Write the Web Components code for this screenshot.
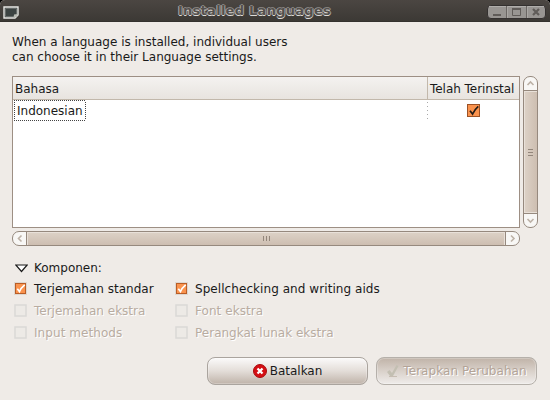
<!DOCTYPE html>
<html lang="id">
<head>
<meta charset="utf-8">
<title>Installed Languages</title>
<style>
html,body{margin:0;height:100%;background:#000;overflow:hidden}
body{font:12px/15px "DejaVu Sans",sans-serif;color:#1a1a1a}
</style>
</head>
<body>
<app-window></app-window>
<script>
function define(name, html) {
  const t = document.createElement('template');
  t.innerHTML = '<style>*{box-sizing:border-box}:host{box-sizing:border-box}</style>' + html;
  customElements.define(name, class extends HTMLElement {
    constructor() {
      super();
      this.attachShadow({mode: 'open'}).append(t.content.cloneNode(true));
    }
  });
}

define('title-bar', `
<style>
:host{display:grid;grid-template-columns:20px 1fr 60px;align-items:center;height:22px;padding:0 4px 0 3px;
 background:linear-gradient(#4b4642,#3c3935);border-bottom:1px solid #35322f}
.t{text-align:center;font-weight:bold;font-size:13px;letter-spacing:.27px;line-height:20px;color:#54504d;white-space:nowrap;
 text-shadow:0 1px 0 #dddbd8,-1px 0 0 #a09ea0,1px 0 0 #96938f,0 -1px 0 #827f7c}
svg{display:block}
.c{justify-self:end;margin-top:3px}
.i{margin-top:4px}
</style>
<svg class="i" width="16" height="13" viewBox="0 0 16 13"><path d="M1 1h14v8l-3 3H1z" fill="#3c4342" stroke="#e9e9e6" stroke-width="1.400"/><path d="M2.500 2.500h11v6l-2.500 2H2.500z" fill="#3c4342" stroke="#666b69"/><path d="M10.500 12 11 8.500l4-.5-1 3z" fill="#b9bbb4"/></svg>
<div class="t"><slot></slot></div>
<svg class="c" width="59" height="14" viewBox="0 0 59 14"><rect x=".5" y=".5" width="58" height="13" rx="3.500" fill="#989592" stroke="#343130"/><path d="M2 1.500h55" stroke="#b0aeab"/><path d="M19.500 1v12M39.500 1v12" stroke="#6a6663"/><path d="M20.500 1v12M40.500 1v12" stroke="#aaa7a4"/><path d="M6 9h8v2H6z" fill="#605c59"/><path d="M25.500 4.500h8v6h-8z" fill="none" stroke="#605c59"/><path d="M25 4h9" stroke="#605c59" stroke-width="2"/><path d="m46 4 6 6m0-6-6 6" stroke="#605c59" stroke-width="2.200"/></svg>`);

define('language-list', `
<style>
:host{display:grid;grid-template-columns:414px 1fr;grid-template-rows:23px 21px 1fr;background:#fff;border:1px solid #9d8f84;height:152px}
.h{background:linear-gradient(#f4f2f0,#e8e4df);border-bottom:1px solid #c2b8ab;padding:5px 0 0 2px;line-height:14px;white-space:nowrap}
.h+.h{border-left:1px solid #c2b8ab;letter-spacing:-.04px}
.r{padding-left:1px}
.f{display:block;width:72px;height:21px;padding:4px 0 0 3px;background:repeating-linear-gradient(90deg,#444 0 1px,#fff 1px 2px) top/100% 1px no-repeat,repeating-linear-gradient(90deg,#444 0 1px,#fff 1px 2px) bottom/100% 1px no-repeat,repeating-linear-gradient(#444 0 1px,#fff 1px 2px) left/1px 100% no-repeat,repeating-linear-gradient(#444 0 1px,#fff 1px 2px) right/1px 100% no-repeat}
.k{display:flex;justify-content:center;padding:4px 0 0 1px;background:repeating-linear-gradient(#fff 0 2px,#aaa 2px 3px,#fff 3px 4px) left/1px 100% no-repeat}
</style>
<div class="h">Bahasa</div><div class="h">Telah Terinstal</div>
<div class="r"><span class="f">Indonesian</span></div>
<div class="k"><svg width="13" height="13"><rect x=".5" y=".5" width="12" height="12" fill="#fa934e" stroke="#9c5226"/><path d="M3 6.700 5.600 10Q7.500 5.500 11.300 2.300" fill="none" stroke="#231b16" stroke-width="1.700"/></svg></div>`);

define('scroll-y', `
<style>:host{display:flex;flex-direction:column;width:15px;height:152px;border:1px solid #96897e;border-radius:7px;overflow:hidden;background:#f8f7f5}
svg{display:block;flex:none}
.b{flex:1;display:grid;place-items:center;border:solid #96897e;border-width:1px 0;background:linear-gradient(90deg,#ddd2c7,#cdbeb1);box-shadow:inset 1px 1px #e9e1d9,inset 0 -1px #e9e1d9}</style>
<svg width="13" height="13"><path d="m3.500 8 3-3 3 3" fill="none" stroke="#bdb2a7" stroke-width="1.600"/></svg>
<div class="b"><svg width="5" height="7"><path d="M0 .5h5M0 3.500h5M0 6.500h5" stroke="#93867b"/></svg></div>
<svg width="13" height="13"><path d="m3.500 5 3 3 3-3" fill="none" stroke="#bdb2a7" stroke-width="1.600"/></svg>`);

define('scroll-x', `
<style>:host{display:flex;height:15px;width:508px;border:1px solid #96897e;border-radius:7px;overflow:hidden;background:#f8f7f5}
svg{display:block;flex:none}
.b{flex:1;display:grid;place-items:center;border:solid #96897e;border-width:0 1px;background:linear-gradient(#ddd2c7,#cdbeb1);box-shadow:inset 1px 1px #e9e1d9,inset -1px 0 #e9e1d9}</style>
<svg width="13" height="13"><path d="m8.500 3.500-3 3 3 3" fill="none" stroke="#bdb2a7" stroke-width="1.600"/></svg>
<div class="b"><svg width="7" height="5"><path d="M.5 0v5M3.500 0v5M6.500 0v5" stroke="#93867b"/></svg></div>
<svg width="13" height="13"><path d="m5 3.500 3 3-3 3" fill="none" stroke="#bdb2a7" stroke-width="1.600"/></svg>`);

define('check-option', `
<style>:host{display:flex;align-items:center;height:22px;gap:7px;white-space:nowrap}
svg{flex:none;display:block;margin-bottom:2px}.off{display:none}
:host([disabled]){color:#b8aca1;text-shadow:1px 1px #fff}
:host([disabled]) .on{display:none}:host([disabled]) .off{display:block}</style>
<svg class="on" width="13" height="13"><rect width="13" height="13" fill="#ded7d0"/><rect x="1.500" y="1.500" width="10" height="10" fill="#fa934e" stroke="#b95d26"/><path d="M3.300 6.800 5.500 9.500Q7 5.800 10.700 2.800" fill="none" stroke="#fff" stroke-width="1.700"/></svg>
<svg class="off" width="13" height="13"><path d="M1 1h11v11H1z" fill="#edeae6" stroke="#dad9d6" stroke-width="1.500"/></svg>
<span><slot></slot></span>`);

define('action-button', `
<style>:host{display:flex;align-items:center;justify-content:center;gap:3px;width:161px;height:28px;border:1px solid #aaa49e;border-radius:8px;white-space:nowrap;
background:linear-gradient(#fbfafa,#e3ddd8 50%,#bfb3a9);box-shadow:inset 0 0 0 1px #ffffff40}
:host([disabled]){background:linear-gradient(#c0b3a8,#d9d1ca 50%,#efecea);color:#b3a498;text-shadow:1px 1px #fff;border-color:#b5b0aa;letter-spacing:.05px}</style>
<slot name="icon"></slot><span><slot></slot></span>`);

define('app-window', `
<style>
:host{display:flex;flex-direction:column;width:550px;height:400px;background:#efebe7;border-radius:5px 5px 0 0;overflow:hidden}
main{padding:13px 12px 0}
p{margin:0 0 11px}
.s{display:grid;grid-template-columns:508px 15px;gap:3px}
.e{display:flex;align-items:center;height:22px;margin-top:11px;gap:6px;padding-left:3px}
.g{display:grid;grid-template-columns:161px 1fr;padding-left:2px;margin-top:-1px}
.a{display:flex;justify-content:flex-end;gap:8px;margin-top:13px;padding-right:1px}
.w{letter-spacing:.065px}
svg{display:block}
</style>
<title-bar>Installed Languages</title-bar>
<main>
<p>When a language is installed, individual users<br>can choose it in their Language settings.</p>
<div class="s"><language-list></language-list><scroll-y></scroll-y><scroll-x></scroll-x></div>
<div class="e"><svg width="13" height="9"><path d="M.8 1h11.400L6.500 7.500z" fill="#fff" stroke="#1a1a1a" stroke-width="1.200"/></svg><span>Komponen:</span></div>
<div class="g">
<check-option>Terjemahan standar</check-option><check-option class="w">Spellchecking and writing aids</check-option>
<check-option disabled>Terjemahan ekstra</check-option><check-option class="w" disabled>Font ekstra</check-option>
<check-option class="w" disabled>Input methods</check-option><check-option disabled>Perangkat lunak ekstra</check-option>
</div>
<div class="a">
<action-button><svg slot="icon" width="14" height="14"><circle cx="7" cy="7" r="6.500" fill="#d40f14" stroke="#a90a0e"/><path d="m4.500 4.500 5 5m0-5-5 5" stroke="#fff" stroke-width="2.300"/></svg>Batalkan</action-button>
<action-button disabled><svg slot="icon" width="14" height="14"><path d="M1 8 3.500 6 6 9 10.500 1l2 1L7 12H4z" fill="#c3bfb2"/><path d="M3 12.500h8" stroke="#c6bdb2"/></svg>Terapkan Perubahan</action-button>
</div>
</main>`);
</script>
</body>
</html>
